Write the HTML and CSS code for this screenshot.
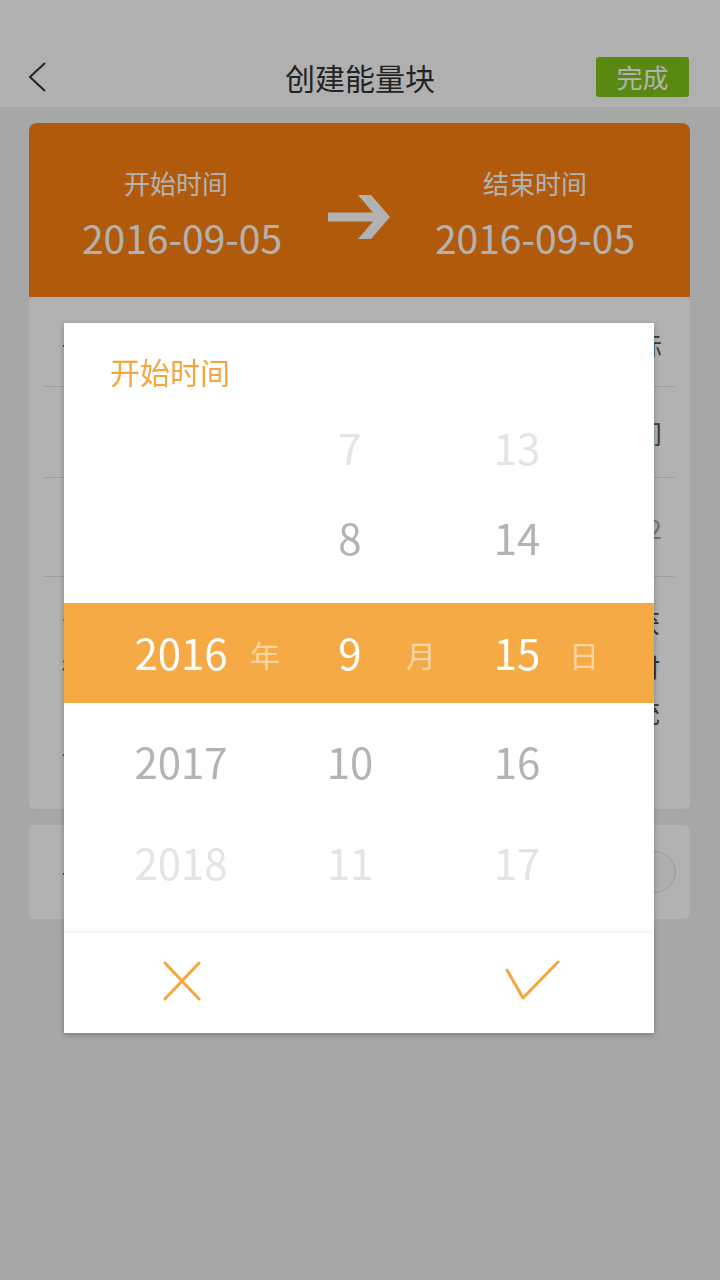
FILE: index.html
```html
<!DOCTYPE html>
<html lang="zh-CN">
<head>
<meta charset="utf-8">
<title>创建能量块</title>
<link rel="stylesheet" href="styles.css">
</head>
<body>
<div class="screen">
  <div class="statusbar"></div>
  <header class="topbar">
    <div class="topbar-left">
      <svg class="back" width="18" height="30" viewBox="0 0 18 30"><polyline points="16,1 1,15 16,29" fill="none" stroke="#333" stroke-width="2"/></svg>
    </div>
    <h1 class="title">创建能量块</h1>
    <div class="topbar-right"><span class="done">完成</span></div>
  </header>

  <main class="content">
    <section class="range">
      <div class="range-col">
        <div class="range-label">开始时间</div>
        <div class="range-date range-date-start">2016-09-05</div>
      </div>
      <svg class="range-arrow" width="62" height="44" viewBox="0 0 62 44"><path d="M30 0 L43 0 L62 22 L43 44 L30 44 L45 26.5 L0 26.5 L0 17.5 L45 17.5 Z" fill="#fff"/></svg>
      <div class="range-col">
        <div class="range-label">结束时间</div>
        <div class="range-date">2016-09-05</div>
      </div>
    </section>

    <section class="card form">
      <div class="row row-1"><span class="row-label">一个名称</span><span class="row-value">请输入能量块目标</span></div>
      <div class="row row-2"><span class="row-label">目标类型</span><span class="row-value">按时间</span></div>
      <div class="row row-3"><span class="row-label">目标数量</span><span class="row-value muted">12</span></div>
      <div class="row row-4"><p class="desc">注：能量块用于记录一段时间内的计划，完成后可获得相应的能量，能量可用于兑换奖励，请合理安排时间，按计划认真执行，不要中途放弃，系统将自动统计进度并提醒执行</p></div>
    </section>

    <section class="card switch-card">
      <span class="row-label">一 提醒</span>
      <span class="radio"></span>
    </section>
  </main>
</div>

<div class="mask"></div>

<div class="dialog">
  <div class="dialog-title">开始时间</div>
  <div class="picker">
    <div class="prow prow-1 far">
      <span class="c-m">7</span><span class="c-d">13</span>
    </div>
    <div class="prow prow-2 near">
      <span class="c-m">8</span><span class="c-d">14</span>
    </div>
    <div class="prow prow-sel">
      <span class="c-y">2016</span><span class="u-y">年</span>
      <span class="c-m">9</span><span class="u-m">月</span>
      <span class="c-d">15</span><span class="u-d">日</span>
    </div>
    <div class="prow prow-4 near">
      <span class="c-y">2017</span><span class="c-m">10</span><span class="c-d">16</span>
    </div>
    <div class="prow prow-5 far">
      <span class="c-y">2018</span><span class="c-m">11</span><span class="c-d">17</span>
    </div>
  </div>
  <div class="dialog-actions">
    <span class="action">
      <svg width="40" height="40" viewBox="0 0 40 40"><path d="M3 2 L37 38 M37 2 L3 38" stroke="#f6a63c" stroke-width="3" stroke-linecap="round" fill="none"/></svg>
    </span>
    <span class="action">
      <svg width="56" height="42" viewBox="0 0 56 42"><polyline points="2,10 18,38 53,2" stroke="#f6a63c" stroke-width="3" stroke-linecap="round" stroke-linejoin="round" fill="none"/></svg>
    </span>
  </div>
</div>
</body>
</html>
```

FILE: styles.css
```css
* { box-sizing: border-box; }

html, body {
  margin: 0;
  padding: 0;
}

body {
  width: 720px;
  height: 1280px;
  background: #f0f0f0;
  font-family: "Noto Sans CJK SC", "Noto Sans", sans-serif;
  color: #333;
  overflow: hidden;
}

.screen {
  width: 720px;
  height: 1280px;
}

.statusbar {
  height: 46px;
  background: #fcfcfc;
}

.topbar {
  height: 61px;
  background: #fcfcfc;
  display: grid;
  grid-template-columns: 1fr auto 1fr;
  align-items: center;
}

.topbar-left {
  padding-left: 29px;
  display: flex;
  align-items: center;
}

.back { display: block; }

.title {
  margin: 0;
  font-size: 30px;
  font-weight: 400;
  color: #333;
  line-height: 1;
}

.topbar-right {
  display: flex;
  justify-content: flex-end;
  padding-right: 31px;
}

.done {
  width: 93px;
  height: 40px;
  border-radius: 3px;
  background: #81c51b;
  color: #fff;
  font-size: 26px;
  display: flex;
  align-items: center;
  justify-content: center;
  line-height: 1;
}

.content {
  padding: 16px 30px 0 29px;
}

.range {
  height: 174px;
  background: #ff8210;
  border-radius: 8px 8px 0 0;
  display: flex;
  align-items: center;
  padding: 10px 0 0 12px;
  color: #fff;
}

.range-col {
  width: 270px;
  display: flex;
  flex-direction: column;
  align-items: center;
}

.range-label {
  font-size: 26px;
  line-height: 36px;
}

.range-date {
  font-size: 39px;
  line-height: 56px;
  margin-top: 8px;
}

.range-date-start {
  padding-left: 12px;
}

.range-arrow {
  display: block;
  margin: 4px 10px 0 17px;
}

.card {
  background: #fff;
  border-radius: 6px;
}

.form {
  height: 512px;
  display: flex;
  flex-direction: column;
}

.row {
  margin: 0 16px 0 15px;
  padding: 0 12px 0 18px;
  display: flex;
  align-items: center;
  justify-content: space-between;
  font-size: 26px;
  border-bottom: 1px solid #e2e2e2;
}

.row-1 { height: 90px; padding-top: 6px; }
.row-2 { height: 91px; }
.row-3 { height: 99px; }
.row-4 { flex: 1; border-bottom: none; align-items: flex-start; }

.row-label { color: #333; }
.row-value { color: #555; }
.muted { color: #aaa; }

.desc {
  margin: 22px 0 0;
  font-size: 26px;
  line-height: 45px;
  color: #444;
}

.switch-card {
  margin-top: 16px;
  height: 94px;
  display: flex;
  align-items: center;
  justify-content: space-between;
  padding: 0 14px 0 33px;
  font-size: 26px;
}

.radio {
  width: 42px;
  height: 42px;
  border-radius: 50%;
  border: 1px solid #ddd;
  background: #fafafa;
}

.mask {
  position: fixed;
  inset: 0;
  background: rgba(0, 0, 0, 0.3);
  z-index: 10;
}

.dialog {
  position: fixed;
  left: 64px;
  top: 323px;
  width: 590px;
  height: 710px;
  background: #fff;
  z-index: 11;
  box-shadow: 0 2px 6px rgba(0, 0, 0, 0.28);
  display: flex;
  flex-direction: column;
}

.dialog-title {
  height: 80px;
  padding: 28px 0 0 46px;
  font-size: 30px;
  line-height: 40px;
  color: #f5a63e;
}

.picker {
  height: 530px;
  display: flex;
  flex-direction: column;
}

.prow {
  display: grid;
  grid-template-columns: 57px 120px 48px 7px 108px 34px 36px 86px 48px;
  align-items: start;
  font-size: 42px;
}

.prow span {
  display: flex;
  justify-content: center;
  white-space: nowrap;
}

.c-y { grid-column: 2; }
.u-y { grid-column: 3; }
.c-m { grid-column: 5; }
.u-m { grid-column: 6; }
.c-d { grid-column: 8; }
.u-d { grid-column: 9; }

.prow-1 { height: 92px; line-height: 88px; }
.prow-2 { height: 108px; line-height: 84px; }
.prow-sel {
  height: 100px;
  background: #f6aa45;
  color: #fff;
  line-height: 98px;
}
.prow-4 { height: 112px; padding-top: 16px; line-height: 84px; }
.prow-5 { height: 100px; line-height: 94px; }

.prow-sel .u-y,
.prow-sel .u-m,
.prow-sel .u-d {
  font-size: 30px;
  color: rgba(255, 255, 255, 0.5);
  padding-top: 2px;
}

.near { color: #b3b3b3; }
.far { color: #e4e4e4; }

.dialog-actions {
  height: 100px;
  display: grid;
  grid-template-columns: 236px 1fr;
  align-items: center;
  padding-bottom: 4px;
  box-shadow: 0 -2px 4px rgba(0, 0, 0, 0.06);
}

.action {
  display: flex;
  justify-content: center;
}

.action svg { display: block; }

.action:last-child {
  justify-content: flex-start;
  padding-left: 205px;
}
```
